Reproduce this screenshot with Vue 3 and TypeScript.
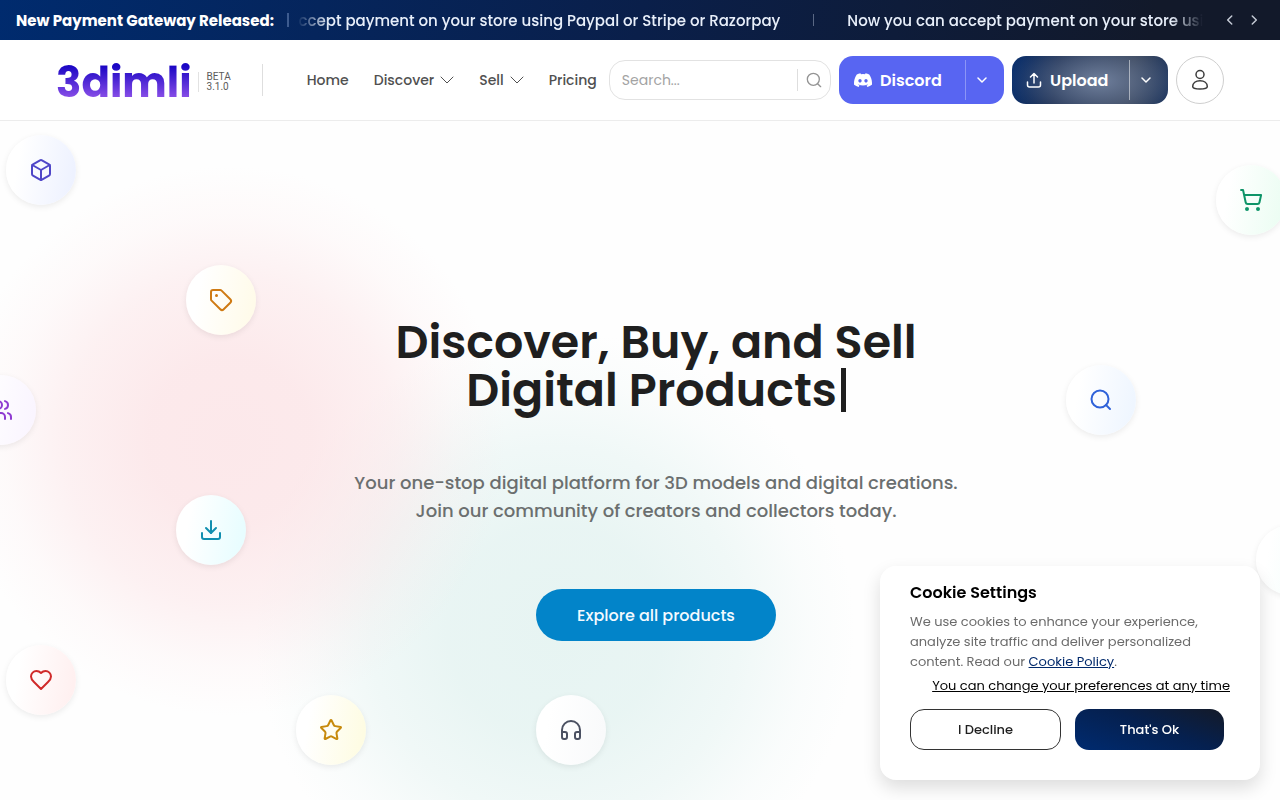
<script setup lang="ts">
import { ref } from 'vue'

interface Bubble {
  name: string
  x: number
  y: number
  color: string
  tint: string
  paths: string[]
}

const announcement = 'Now you can accept payment on your store using Paypal or Stripe or Razorpay'
const tickerOffset = ref(110)
const query = ref('')

const links = [
  { label: 'Home', menu: false },
  { label: 'Discover', menu: true },
  { label: 'Sell', menu: true },
  { label: 'Pricing', menu: false },
]

const bubbles: Bubble[] = [
  {
    name: 'box', x: 6, y: 14, color: '#4f46c8', tint: '#eef2ff',
    paths: [
      'M21 8a2 2 0 0 0-1-1.73l-7-4a2 2 0 0 0-2 0l-7 4A2 2 0 0 0 3 8v8a2 2 0 0 0 1 1.73l7 4a2 2 0 0 0 2 0l7-4A2 2 0 0 0 21 16Z',
      'm3.3 7 8.7 5 8.7-5', 'M12 22V12',
    ],
  },
  {
    name: 'tag', x: 186, y: 144, color: '#cf7a13', tint: '#fffbea',
    paths: [
      'M12.586 2.586A2 2 0 0 0 11.172 2H4a2 2 0 0 0-2 2v7.172a2 2 0 0 0 .586 1.414l8.704 8.704a2.426 2.426 0 0 0 3.42 0l6.58-6.58a2.426 2.426 0 0 0 0-3.42z',
      'M7.5 7a.5.5 0 1 0 0 1 .5.5 0 0 0 0-1',
    ],
  },
  {
    name: 'users', x: -34, y: 254, color: '#8f3bd1', tint: '#faf5ff',
    paths: [
      'M16 21v-2a4 4 0 0 0-4-4H6a4 4 0 0 0-4 4v2',
      'M9 3a4 4 0 1 0 0 8 4 4 0 0 0 0-8',
      'M22 21v-2a4 4 0 0 0-3-3.87', 'M16 3.13a4 4 0 0 1 0 7.75',
    ],
  },
  {
    name: 'download', x: 176, y: 374, color: '#118fb0', tint: '#e8fdff',
    paths: ['M21 15v4a2 2 0 0 1-2 2H5a2 2 0 0 1-2-2v-4', 'm7 10 5 5 5-5', 'M12 15V3'],
  },
  {
    name: 'heart', x: 6, y: 524, color: '#d02a2a', tint: '#fff0f0',
    paths: ['M19 14c1.49-1.46 3-3.21 3-5.5A5.5 5.5 0 0 0 16.5 3c-1.76 0-3 .5-4.5 2-1.5-1.5-2.74-2-4.5-2A5.5 5.5 0 0 0 2 8.5c0 2.3 1.5 4.05 3 5.5l7 7Z'],
  },
  {
    name: 'star', x: 296, y: 574, color: '#c78a0c', tint: '#fefce3',
    paths: ['M11.525 2.295a.53.53 0 0 1 .95 0l2.31 4.679a2.123 2.123 0 0 0 1.595 1.16l5.166.756a.53.53 0 0 1 .294.904l-3.736 3.638a2.123 2.123 0 0 0-.611 1.878l.882 5.14a.53.53 0 0 1-.771.56l-4.618-2.428a2.122 2.122 0 0 0-1.973 0L6.396 21.01a.53.53 0 0 1-.77-.56l.881-5.139a2.122 2.122 0 0 0-.611-1.879L2.16 9.795a.53.53 0 0 1 .294-.906l5.165-.755a2.122 2.122 0 0 0 1.597-1.16z'],
  },
  {
    name: 'headphones', x: 536, y: 574, color: '#4b5162', tint: '#f9fafb',
    paths: ['M3 14h3a2 2 0 0 1 2 2v3a2 2 0 0 1-2 2H5a2 2 0 0 1-2-2v-7a9 9 0 0 1 18 0v7a2 2 0 0 1-2 2h-1a2 2 0 0 1-2-2v-3a2 2 0 0 1 2-2h3'],
  },
  {
    name: 'search', x: 1066, y: 244, color: '#2f62d9', tint: '#eff6ff',
    paths: ['M11 2.5a8.5 8.5 0 1 0 0 17 8.5 8.5 0 0 0 0-17', 'm21 21-4-4'],
  },
  {
    name: 'cart', x: 1216, y: 44, color: '#0e9468', tint: '#ecfdf3',
    paths: [
      'M8 20a1 1 0 1 0 0 2 1 1 0 0 0 0-2', 'M19 20a1 1 0 1 0 0 2 1 1 0 0 0 0-2',
      'M2.05 2.05h2l2.66 12.42a2 2 0 0 0 2 1.58h9.78a2 2 0 0 0 1.95-1.57l1.65-7.43H5.12',
    ],
  },
  { name: 'globe', x: 1256, y: 404, color: '#0f9c8e', tint: '#f0fdfa', paths: ['M12 2a10 10 0 1 0 0 20 10 10 0 0 0 0-20', 'M2 12h20'] },
]
</script>

<template>
  <div class="page">
    <section class="announce">
      <strong>New Payment Gateway Released:</strong>
      <span class="announce-rule"></span>
      <div class="ticker">
        <div class="track" :style="{ transform: `translateX(-${tickerOffset}px)` }">
          <span>{{ announcement }}</span>
          <i></i>
          <span>{{ announcement }}</span>
        </div>
      </div>
      <div class="arrows">
        <button type="button" aria-label="Previous">
          <svg viewBox="0 0 24 24" width="14" height="14"><path d="m15 19-7-7 7-7" /></svg>
        </button>
        <button type="button" aria-label="Next">
          <svg viewBox="0 0 24 24" width="14" height="14"><path d="m9 19 7-7-7-7" /></svg>
        </button>
      </div>
    </section>

    <header class="header">
      <a class="brand" href="#">
        <span class="wordmark">3dimli</span>
        <span class="version">BETA<br />3.1.0</span>
      </a>
      <span class="header-rule"></span>
      <nav>
        <a v-for="link in links" :key="link.label" href="#">
          {{ link.label }}
          <svg v-if="link.menu" viewBox="0 0 14 8" width="14" height="8"><path d="m1 1 6 6 6-6" /></svg>
        </a>
      </nav>
      <form class="search" @submit.prevent>
        <input v-model="query" type="text" placeholder="Search..." aria-label="Search" />
        <button type="submit" aria-label="Submit search">
          <svg viewBox="0 0 24 24" width="16" height="16"><circle cx="11" cy="11" r="9" /><path d="m22 22-4.5-4.5" /></svg>
        </button>
      </form>
      <div class="split discord">
        <button type="button" class="main">
          <svg class="solid" viewBox="0 0 24 18" width="18" height="14">
            <path fill-rule="evenodd" d="M20.3 1.5A19.8 19.8 0 0 0 15.4 0c-.2.4-.5.9-.6 1.3a18.3 18.3 0 0 0-5.5 0C9.1.9 8.8.4 8.6 0a19.7 19.7 0 0 0-4.9 1.5C.5 6.200-.3 10.7.1 15.2A19.9 19.9 0 0 0 6.1 18.2c.5-.6.9-1.3 1.2-2a13 13 0 0 1-1.9-.9l.5-.4a14.2 14.2 0 0 0 12.2 0l.5.4c-.6.4-1.200.7-1.9.9.4.7.8 1.4 1.2 2a19.8 19.8 0 0 0 6-3c.5-5.200-.8-9.7-3.6-13.7ZM8 12.4c-1.2 0-2.2-1.1-2.2-2.4S6.8 7.6 8 7.6s2.2 1.1 2.2 2.4-1 2.4-2.2 2.4Zm8 0c-1.2 0-2.2-1.1-2.2-2.4s1-2.4 2.2-2.4 2.2 1.1 2.2 2.4-1 2.4-2.2 2.4Z" />
          </svg>
          Discord
        </button>
        <button type="button" class="more" aria-label="Discord options">
          <svg viewBox="0 0 10 6" width="10" height="6"><path d="m1 1 4 4 4-4" /></svg>
        </button>
      </div>
      <div class="split upload">
        <button type="button" class="main">
          <svg viewBox="0 0 16 16" width="16" height="16"><path d="M1.5 10v3a2 2 0 0 0 2 2h9a2 2 0 0 0 2-2v-3M8 11V2M4.5 5 8 1.5 11.5 5" /></svg>
          Upload
        </button>
        <button type="button" class="more" aria-label="Upload options">
          <svg viewBox="0 0 10 6" width="10" height="6"><path d="m1 1 4 4 4-4" /></svg>
        </button>
      </div>
      <button type="button" class="account" aria-label="Account">
        <svg viewBox="0 0 18 22" width="18" height="22"><circle cx="9" cy="5.500" r="4" /><path d="M1.7 17.5c0-3.600 3-5.8 7.3-5.8s7.3 2.2 7.3 5.8c0 1.6-2.600 2.5-7.3 2.5s-7.3-.9-7.3-2.5Z" /></svg>
      </button>
    </header>

    <main class="hero">
      <span
        v-for="b in bubbles"
        :key="b.name"
        class="bubble"
        :style="{ left: `${b.x}px`, top: `${b.y}px`, color: b.color, '--tint': b.tint }"
      >
        <svg viewBox="0 0 24 24" width="24" height="24"><path v-for="d in b.paths" :key="d" :d="d" /></svg>
      </span>
      <div class="copy">
        <h1>Discover, Buy, and Sell<br />Digital Products<span class="caret"></span></h1>
        <p>Your one-stop digital platform for 3D models and digital creations.<br />Join our community of creators and collectors today.</p>
        <a class="cta" href="#">Explore all products</a>
      </div>
    </main>

    <aside class="cookies" aria-labelledby="cookie-title">
      <h2 id="cookie-title">Cookie Settings</h2>
      <p>We use cookies to enhance your experience,<br />analyze site traffic and deliver personalized<br />content. Read our <a href="#">Cookie Policy</a>.</p>
      <a class="prefs" href="#">You can change your preferences at any time</a>
      <div class="choices">
        <button type="button" class="decline">I Decline</button>
        <button type="button" class="accept">That's Ok</button>
      </div>
    </aside>
  </div>
</template>

<style>
body {
  margin: 0;
  background: #fefefe;
}
</style>

<style scoped>
* {
  box-sizing: border-box;
}
.page {
  display: flex;
  flex-direction: column;
  height: 100vh;
  overflow: hidden;
  font-family: Poppins, Inter, sans-serif;
  color: #1f1f1f;
}
button {
  padding: 0;
  border: 0;
  background: none;
  font: inherit;
  color: inherit;
}
a {
  color: inherit;
  text-decoration: none;
}
svg {
  flex: none;
  fill: none;
  stroke: currentColor;
  stroke-linecap: round;
  stroke-linejoin: round;
}

.announce {
  display: flex;
  flex: none;
  align-items: center;
  height: 40px;
  padding: 0 14px 0 16px;
  background: linear-gradient(100deg, #002b6e 0%, #0a1f4a 50%, #12192a 90%);
  color: #e8effa;
  font-size: 15px;
  white-space: nowrap;
}
.announce strong {
  flex: none;
  color: #fff;
  font-weight: 700;
}
.announce-rule {
  flex: none;
  width: 2px;
  height: 14px;
  margin: 0 8px 0 13px;
  background: #3d5b8f;
}
.ticker {
  flex: 1;
  min-width: 0;
  overflow: hidden;
  font-weight: 500;
  mask-image: linear-gradient(90deg, transparent, #000 32px, #000 calc(100% - 32px), transparent);
}
.track {
  display: flex;
  align-items: center;
}
.track i {
  flex: none;
  width: 1px;
  height: 12px;
  margin: 0 33px;
  background: #5a6884;
}
.arrows {
  display: flex;
  margin-left: 15px;
}
.arrows button {
  display: grid;
  place-items: center;
  width: 24px;
  height: 24px;
  color: #c5cbd6;
}
.arrows svg {
  stroke-width: 2.5;
}

.header {
  display: flex;
  flex: none;
  align-items: center;
  height: 81px;
  padding: 0 56px;
  border-bottom: 1px solid #ececec;
  background: #fff;
}
.brand {
  display: flex;
  align-items: center;
  gap: 6px;
  padding-top: 4px;
}
.wordmark {
  padding-top: 2px;
  background: linear-gradient(#1a06c4 15%, #8a4fe8 85%);
  background-clip: text;
  color: transparent;
  font-size: 42px;
  font-weight: 700;
  line-height: 44px;
}
.version {
  padding-left: 8px;
  border-left: 1px solid #e2e2e2;
  color: #5b5b5b;
  font: 400 10px/10px Roboto, sans-serif;
}
.header-rule {
  width: 1px;
  height: 32px;
  margin: 0 44px 0 31px;
  background: #dedede;
}
nav {
  display: flex;
  gap: 25px;
  margin-right: 12px;
}
nav a {
  display: flex;
  align-items: center;
  gap: 6px;
  color: #505050;
  font-size: 14px;
  font-weight: 500;
}
nav svg {
  stroke-width: 1;
}
.search {
  display: flex;
  flex: 1;
  align-items: center;
  min-width: 0;
  height: 40px;
  margin-right: 8px;
  border: 1px solid #e2e2e2;
  border-radius: 16px;
}
.search input {
  flex: 1;
  min-width: 0;
  padding: 0 12px;
  border: 0;
  outline: 0;
  background: none;
  color: #333;
  font: 400 14px/20px Poppins, Inter, sans-serif;
}
.search input::placeholder {
  color: #a3a3a3;
  opacity: 1;
}
.search button {
  display: grid;
  place-items: center;
  width: 33px;
  height: 22px;
  border-left: 1px solid #dedede;
  color: #949494;
}
.search svg {
  stroke-width: 2;
}
.split {
  display: flex;
  flex: none;
  height: 48px;
  margin-right: 8px;
  border-radius: 14px;
  color: #fff;
  font-size: 16px;
  font-weight: 600;
}
.split button {
  display: flex;
  align-items: center;
}
.main {
  flex: 1;
  gap: 8px;
}
.split .main {
  padding-left: 14px;
}
.split .more {
  justify-content: center;
  width: 39px;
  height: 40px;
  margin-top: 4px;
  padding-right: 6px;
  border-left: 1px solid #ffffff50;
}
.split svg {
  stroke-width: 1.5;
}
.discord {
  width: 165px;
  background: #5865f2;
}
.discord .main {
  padding-left: 15px;
}
.upload {
  width: 156px;
  background:
    radial-gradient(ellipse 66% 110% at 56% 52%, #6f7f9c 0%, #65769599 45%, #5f719240 75%, #5f719200 100%),
    linear-gradient(100deg, #00296b, #0d1f42 30%, #2b3444 75%, #0a2450);
}
.upload .more {
  border-color: #ffffff80;
}
.split .solid {
  fill: currentColor;
  stroke: none;
}
.account {
  display: grid;
  flex: none;
  place-items: center;
  width: 48px;
  height: 48px;
  border: 1px solid #cfcfcf;
  border-radius: 50%;
  color: #3c3c3c;
}
.account svg {
  stroke-width: 1.5;
}

.hero {
  position: relative;
  flex: 1;
  overflow: hidden;
  padding: 197px 0 0 32px;
  background:
    radial-gradient(circle 275px at 230px 320px, #fbdde0a8 0%, #fbdde0a0 30%, #fbdde066 60%, #fbdde022 82%, #fbdde000 100%),
    radial-gradient(circle 300px at 555px 510px, #d6edea94 0%, #d6edea88 35%, #d6edea58 62%, #d6edea1c 84%, #d6edea00 100%),
    #fefefe;
}
.bubble {
  position: absolute;
  display: grid;
  place-items: center;
  width: 70px;
  height: 70px;
  border-radius: 50%;
  background: linear-gradient(100deg, #fff 20%, var(--tint) 90%);
  box-shadow: 0 2px 6px #00000014;
}
.bubble svg {
  stroke-width: 2;
}
.copy {
  position: relative;
  display: flex;
  flex-direction: column;
  align-items: center;
  text-align: center;
}
.copy h1 {
  margin: 0 0 55px;
  font-size: 46px;
  font-weight: 600;
  line-height: 48px;
}
.caret {
  display: inline-block;
  width: 5px;
  height: 44px;
  margin-left: 4px;
  background: currentColor;
  vertical-align: -6px;
}
.copy p {
  margin: 0 0 64px;
  color: #6b6f6f;
  font-size: 18px;
  font-weight: 500;
  line-height: 28px;
}
.cta {
  display: grid;
  place-items: center;
  width: 240px;
  height: 52px;
  border-radius: 26px;
  background: #0284c9;
  color: #f4faff;
  font-size: 16px;
  font-weight: 500;
}

.cookies {
  position: fixed;
  right: 20px;
  bottom: 20px;
  width: 380px;
  padding: 14px 30px 30px;
  border-radius: 16px;
  background: #fff;
  box-shadow: 0 8px 18px #00000022;
}
.cookies h2 {
  margin: 0 0 7px;
  color: #000;
  font-size: 16px;
  font-weight: 600;
  line-height: 25px;
}
.cookies p {
  margin: 0 0 4px;
  color: #6b6b6b;
  font-size: 13px;
  line-height: 20px;
}
.cookies p a {
  color: #00296b;
  text-decoration: underline;
}
.prefs {
  display: block;
  color: #000;
  font-size: 13px;
  line-height: 20px;
  text-align: right;
  text-decoration: underline;
}
.choices {
  display: flex;
  gap: 14px;
  margin: 13px 6px 0 0;
}
.choices button {
  flex: 1;
  height: 41px;
  border-radius: 14px;
  font-size: 13px;
  font-weight: 500;
}
.choices .decline {
  border: 1px solid #333;
}
.choices .accept {
  background: linear-gradient(20deg, #002b70, #05204f 55%, #141a28);
  color: #fff;
}
</style>
